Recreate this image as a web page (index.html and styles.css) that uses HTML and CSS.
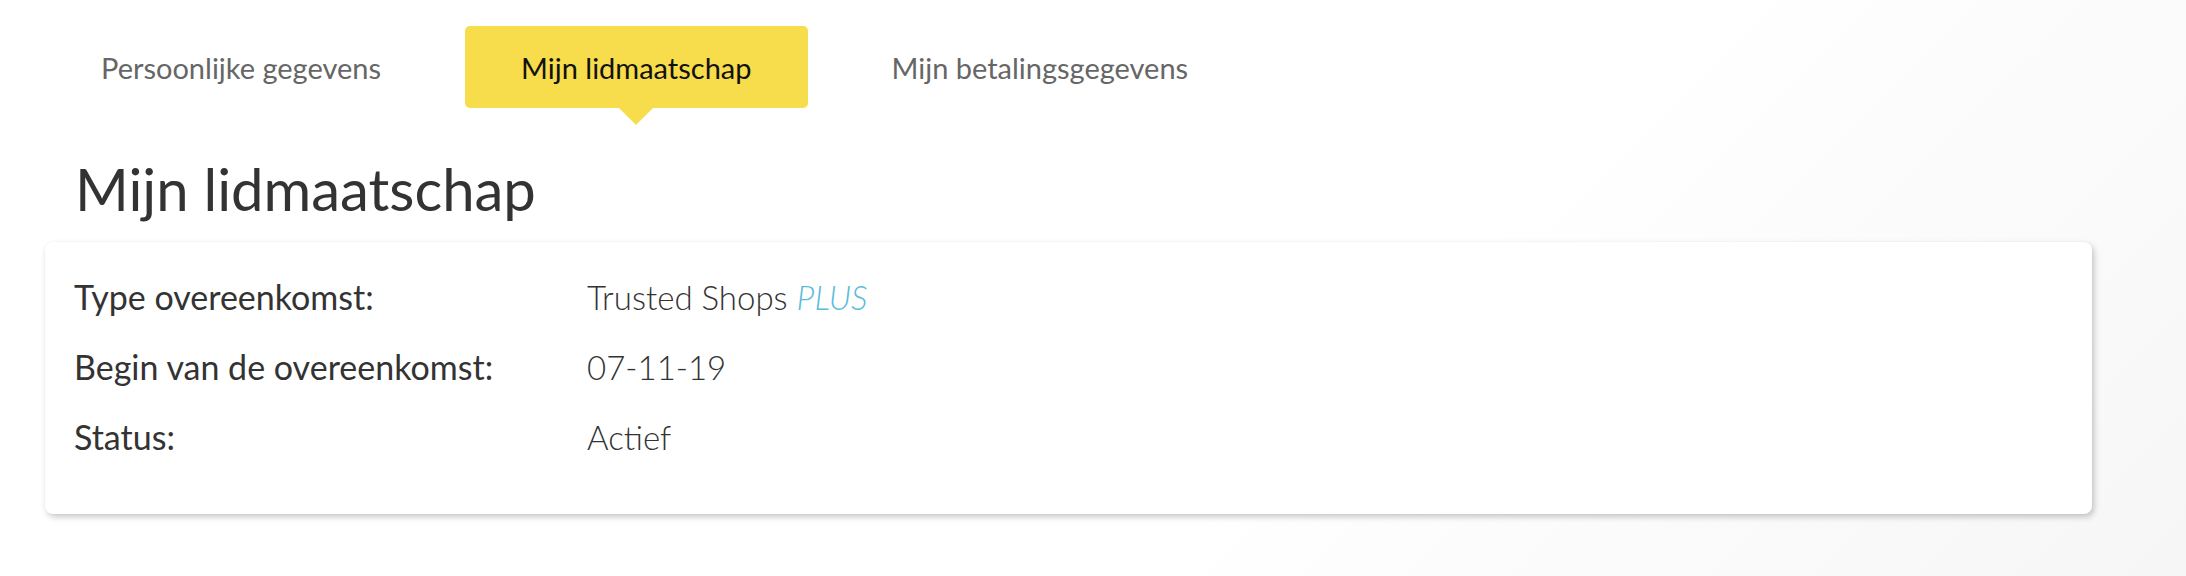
FILE: index.html
```html
<!DOCTYPE html>
<html>
<head>
  <title>Mijn lidmaatschap</title>
  <link rel="stylesheet" href="styles.css">
</head>
<body>
  <div class="page">
    <nav class="tabs">
      <a class="tab" href="#">Persoonlijke gegevens</a>
      <a class="tab tab-active" href="#">Mijn lidmaatschap</a>
      <a class="tab" href="#">Mijn betalingsgegevens</a>
    </nav>

    <h1 class="title">Mijn lidmaatschap</h1>

    <div class="card">
      <dl class="details">
        <dt class="label">Type overeenkomst:</dt>
        <dd class="value">Trusted Shops <em class="plan">PLUS</em></dd>

        <dt class="label">Begin van de overeenkomst:</dt>
        <dd class="value">07-11-19</dd>

        <dt class="label">Status:</dt>
        <dd class="value">Actief</dd>
      </dl>
    </div>
  </div>
</body>
</html>
```

FILE: styles.css
```css
/* Reset and base styles */
* {
  margin: 0;
  padding: 0;
  box-sizing: border-box;
}

html, body {
  height: 100%;
}

body {
  font-family: Lato, "Open Sans", "Noto Sans", sans-serif;
  color: #333333;
  background: linear-gradient(135deg, #ffffff 0%, #ffffff 62%, #f6f6f6 100%);
}

.page {
  width: 2047px;
  margin-left: 45px;
  padding-top: 26px;
}

/* Tab navigation */
.tabs {
  display: flex;
  gap: 28px;
}

.tab {
  position: relative;
  display: flex;
  align-items: center;
  height: 82px;
  padding: 0 56px;
  font-size: 29px;
  color: #666666;
  text-decoration: none;
  border-radius: 5px;
}

.tab-active {
  background-color: #f7dc4c;
  color: #111111;
}

.tab-active::after {
  content: '';
  position: absolute;
  left: 50%;
  bottom: -17px;
  width: 0;
  height: 0;
  margin-left: -18px;
  border-left: 18px solid transparent;
  border-right: 18px solid transparent;
  border-top: 18px solid #f7dc4c;
}

.title {
  font-size: 58px;
  font-weight: 400;
  color: #333333;
  padding-left: 30px;
  margin-top: 46px;
  line-height: 70px;
}

/* Membership card */
.card {
  margin-top: 18px;
  background-color: #ffffff;
  border-radius: 8px;
  padding: 20px 29px 42px;
  box-shadow: 2px 3px 6px rgba(0, 0, 0, 0.22), 0 0 2px rgba(0, 0, 0, 0.04);
}

.details {
  display: grid;
  grid-template-columns: 513px 1fr;
}

.label, .value {
  line-height: 70px;
}

.label {
  font-size: 34px;
  font-weight: 400;
  color: #333333;
}

.value {
  font-size: 33px;
  font-weight: 300;
  color: #333333;
}

.plan {
  color: #5bbcd9;
}
```
